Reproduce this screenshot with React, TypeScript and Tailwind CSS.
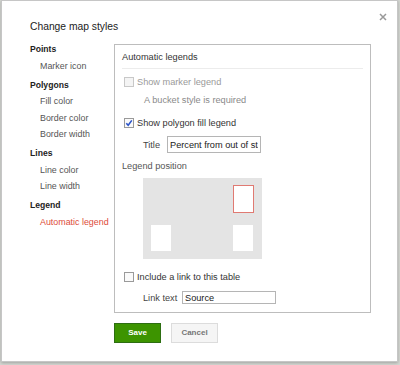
import React from 'react';

const font = { fontFamily: '"Liberation Sans", Arial, sans-serif' };

function Check({ checked = false, disabled = false }: { checked?: boolean; disabled?: boolean }) {
  return (
    <svg width="10" height="10" viewBox="0 0 10 10" className="shrink-0">
      <rect x="0.5" y="0.5" width="9" height="9" fill={disabled ? '#f4f4f4' : '#fafafa'} stroke={disabled ? '#c8c8c8' : '#9a9a9a'} />
      {checked && <path d="M2.3 5.2 L4.2 7.3 L7.8 2.4" fill="none" stroke="#2b54c9" strokeWidth="1.6" />}
    </svg>
  );
}

const nav: { head: string; items: string[] }[] = [
  { head: 'Points', items: ['Marker icon'] },
  { head: 'Polygons', items: ['Fill color', 'Border color', 'Border width'] },
  { head: 'Lines', items: ['Line color', 'Line width'] },
  { head: 'Legend', items: ['Automatic legend'] },
];

export default function App() {
  return (
    <div className="w-[400px] h-[365px] overflow-hidden bg-[#d5d8d3] pl-[1px]" style={font}>
      <div className="relative w-[397px] h-[362px] bg-white border border-[#c6c6c6] shadow-[0_1px_3px_rgba(0,0,0,0.25)] pl-[28px] pt-[19px]">
        <button className="absolute top-[12px] right-[10px] w-[8px] h-[8px]">
          <svg width="8" height="8" viewBox="0 0 8 8">
            <path d="M1 1 L7 7 M7 1 L1 7" stroke="#999" strokeWidth="1.5" />
          </svg>
        </button>
        <div className="text-[10.3px] leading-[14px] text-[#222]">Change map styles</div>

        <div className="flex mt-[7px]">
          <div className="w-[84px] text-[8.9px] leading-[16.5px]">
            {nav.map((g, i) => (
              <div key={g.head} className={i > 0 ? 'mt-[2.5px]' : ''}>
                <div className="font-bold text-[8.6px] text-[#222]">{g.head}</div>
                {g.items.map((it) => (
                  <div key={it} className={`pl-[10px] ${it === 'Automatic legend' ? 'text-[#dd4b39]' : 'text-[#555]'}`}>
                    {it}
                  </div>
                ))}
              </div>
            ))}
          </div>

          <div className="flex flex-col">
            <div className="mt-[3px] w-[257px] h-[269px] border border-[#bdbdbd] px-[7px] text-[9.2px] leading-[12px] text-[#444]">
              <div className="mt-[6px] text-[#333]">Automatic legends</div>
              <div className="mt-[5px] h-px bg-[#ececec]" />

              <div className="mt-[7px] flex items-center gap-[3px] pl-[2px] text-[#9a9a9a]">
                <Check disabled />
                <span>Show marker legend</span>
              </div>
              <div className="mt-[6px] pl-[22px] text-[#8a8a8a]">A bucket style is required</div>

              <div className="mt-[11px] flex items-center gap-[3px] pl-[2px] text-[#333]">
                <Check checked />
                <span>Show polygon fill legend</span>
              </div>
              <div className="mt-[7px] flex items-center pl-[21px]">
                <span className="w-[24px] text-[#444]">Title</span>
                <input
                  readOnly
                  defaultValue="Percent from out of state visitors"
                  className="w-[94px] h-[17px] border border-[#b5b5b5] px-[2px] text-[9.2px] text-[#222] outline-none"
                  style={font}
                />
              </div>

              <div className="mt-[7px] text-[#555]">Legend position</div>
              <div className="mt-[6px] ml-[21px] w-[119px] h-[81px] bg-[#e4e4e4] pl-[8px] pr-[8px] pt-[7px] pb-[8px] flex flex-col justify-between">
                <div className="flex justify-between">
                  <div className="w-[21px] h-[27px]" />
                  <div className="w-[21px] h-[28px] bg-white border border-[#e07a72]" />
                </div>
                <div className="flex justify-between">
                  <div className="w-[20px] h-[26px] bg-white" />
                  <div className="w-[20px] h-[26px] bg-white mr-[1px]" />
                </div>
              </div>

              <div className="mt-[12px] flex items-center gap-[3px] pl-[2px] text-[#333]">
                <Check />
                <span>Include a link to this table</span>
              </div>
              <div className="mt-[8px] flex items-center pl-[21px]">
                <span className="w-[39px] text-[#444]">Link text</span>
                <input
                  readOnly
                  defaultValue="Source"
                  className="w-[94px] h-[13px] border border-[#b5b5b5] px-[2px] text-[9.2px] text-[#222] outline-none"
                  style={font}
                />
              </div>
            </div>

            <div className="mt-[10px] flex gap-[10px]">
              <button className="w-[47px] h-[20px] bg-[#3d9400] border border-[#2d6e12] text-white font-bold text-[8px]">
                Save
              </button>
              <button className="w-[47px] h-[20px] bg-[#f5f5f5] border border-[#dcdcdc] text-[#777] font-bold text-[8px]">
                Cancel
              </button>
            </div>
          </div>
        </div>
      </div>
    </div>
  );
}
